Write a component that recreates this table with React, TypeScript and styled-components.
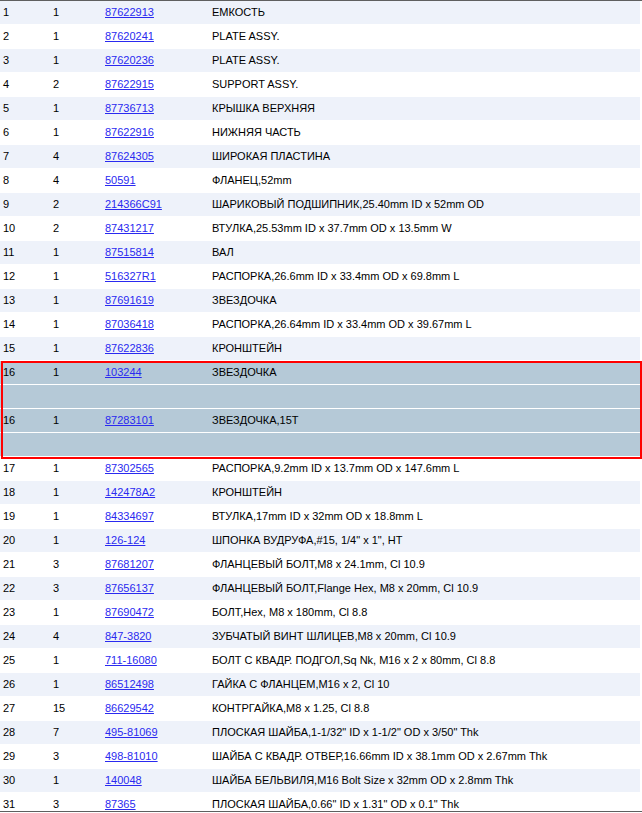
import React from "react";
import styled, { createGlobalStyle } from "styled-components";

const Global = createGlobalStyle`
  html, body { margin: 0; padding: 0; background: #ffffff; }
  body { font-family: "Liberation Sans", Arial, sans-serif; font-size: 11px; color: #000; }
`;

const Frame = styled.div`
  box-sizing: border-box;
  width: 642px;
  height: 812px;
  border-top: 1px solid #5f5f5f;
  border-bottom: 1px solid #5f5f5f;
  overflow: hidden;
`;

const Table = styled.div`
  width: 640px;
  display: flex;
  flex-direction: column;
`;

const Row = styled.div<{ $tone: "light" | "white" | "selected" }>`
  box-sizing: border-box;
  height: 24px;
  display: grid;
  grid-template-columns: 50px 52px 107px 1fr;
  align-items: center;
  border-bottom: 1px solid #ffffff;
  background: ${(p) =>
    p.$tone === "selected" ? "#b5c9d7" : p.$tone === "light" ? "#eef2fa" : "#ffffff"};
`;

const Cell = styled.div`
  padding-left: 3px;
  white-space: nowrap;
  line-height: 13px;
`;

const PartLink = styled.a`
  color: #2a2af0;
  text-decoration: underline;
  cursor: pointer;
`;

const Group = styled.div`
  position: relative;
  display: flex;
  flex-direction: column;
`;

const GroupOutline = styled.div`
  position: absolute;
  top: 0;
  left: 1px;
  right: -2px;
  bottom: -2px;
  border: 2px solid #ff0000;
  pointer-events: none;
`;

type Item = [string, string, string, string];

const before: Item[] = [
  ["1", "1", "87622913", "ЕМКОСТЬ"],
  ["2", "1", "87620241", "PLATE ASSY."],
  ["3", "1", "87620236", "PLATE ASSY."],
  ["4", "2", "87622915", "SUPPORT ASSY."],
  ["5", "1", "87736713", "КРЫШКА ВЕРХНЯЯ"],
  ["6", "1", "87622916", "НИЖНЯЯ ЧАСТЬ"],
  ["7", "4", "87624305", "ШИРОКАЯ ПЛАСТИНА"],
  ["8", "4", "50591", "ФЛАНЕЦ,52mm"],
  ["9", "2", "214366C91", "ШАРИКОВЫЙ ПОДШИПНИК,25.40mm ID x 52mm OD"],
  ["10", "2", "87431217", "ВТУЛКА,25.53mm ID x 37.7mm OD x 13.5mm W"],
  ["11", "1", "87515814", "ВАЛ"],
  ["12", "1", "516327R1", "РАСПОРКА,26.6mm ID x 33.4mm OD x 69.8mm L"],
  ["13", "1", "87691619", "ЗВЕЗДОЧКА"],
  ["14", "1", "87036418", "РАСПОРКА,26.64mm ID x 33.4mm OD x 39.67mm L"],
  ["15", "1", "87622836", "КРОНШТЕЙН"],
];

const selected: Item[] = [
  ["16", "1", "103244", "ЗВЕЗДОЧКА"],
  ["16", "1", "87283101", "ЗВЕЗДОЧКА,15T"],
];

const after: Item[] = [
  ["17", "1", "87302565", "РАСПОРКА,9.2mm ID x 13.7mm OD x 147.6mm L"],
  ["18", "1", "142478A2", "КРОНШТЕЙН"],
  ["19", "1", "84334697", "ВТУЛКА,17mm ID x 32mm OD x 18.8mm L"],
  ["20", "1", "126-124", "ШПОНКА ВУДРУФА,#15, 1/4\" x 1\", HT"],
  ["21", "3", "87681207", "ФЛАНЦЕВЫЙ БОЛТ,M8 x 24.1mm, Cl 10.9"],
  ["22", "3", "87656137", "ФЛАНЦЕВЫЙ БОЛТ,Flange Hex, M8 x 20mm, Cl 10.9"],
  ["23", "1", "87690472", "БОЛТ,Hex, M8 x 180mm, Cl 8.8"],
  ["24", "4", "847-3820", "ЗУБЧАТЫЙ ВИНТ ШЛИЦЕВ,M8 x 20mm, Cl 10.9"],
  ["25", "1", "711-16080", "БОЛТ С КВАДР. ПОДГОЛ,Sq Nk, M16 x 2 x 80mm, Cl 8.8"],
  ["26", "1", "86512498", "ГАЙКА С ФЛАНЦЕМ,M16 x 2, Cl 10"],
  ["27", "15", "86629542", "КОНТРГАЙКА,M8 x 1.25, Cl 8.8"],
  ["28", "7", "495-81069", "ПЛОСКАЯ ШАЙБА,1-1/32\" ID x 1-1/2\" OD x 3/50\" Thk"],
  ["29", "3", "498-81010", "ШАЙБА С КВАДР. ОТВЕР,16.66mm ID x 38.1mm OD x 2.67mm Thk"],
  ["30", "1", "140048", "ШАЙБА БЕЛЬВИЛЯ,M16 Bolt Size x 32mm OD x 2.8mm Thk"],
  ["31", "3", "87365", "ПЛОСКАЯ ШАЙБА,0.66\" ID x 1.31\" OD x 0.1\" Thk"],
];

const PartRow = ({ item, tone }: { item: Item; tone: "light" | "white" | "selected" }) => (
  <Row $tone={tone}>
    <Cell>{item[0]}</Cell>
    <Cell>{item[1]}</Cell>
    <Cell>
      <PartLink>{item[2]}</PartLink>
    </Cell>
    <Cell>{item[3]}</Cell>
  </Row>
);

const EmptyRow = () => (
  <Row $tone="selected">
    <Cell />
    <Cell />
    <Cell />
    <Cell />
  </Row>
);

export default function App() {
  return (
    <>
      <Global />
      <Frame>
        <Table>
          {before.map((it, i) => (
            <PartRow key={"b" + i} item={it} tone={i % 2 === 0 ? "light" : "white"} />
          ))}
          <Group>
            {selected.map((it, i) => (
              <React.Fragment key={"s" + i}>
                <PartRow item={it} tone="selected" />
                <EmptyRow />
              </React.Fragment>
            ))}
            <GroupOutline />
          </Group>
          {after.map((it, i) => (
            <PartRow key={"a" + i} item={it} tone={i % 2 === 0 ? "white" : "light"} />
          ))}
        </Table>
      </Frame>
    </>
  );
}
